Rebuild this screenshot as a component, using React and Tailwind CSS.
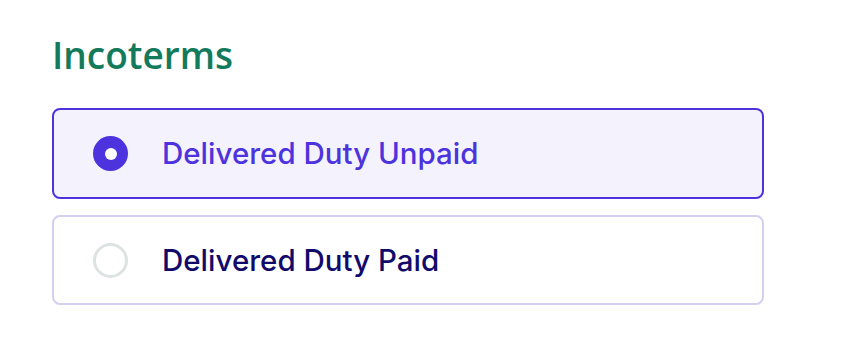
import { useState } from 'react';

const options = [
  { id: 'ddu', label: 'Delivered Duty Unpaid' },
  { id: 'ddp', label: 'Delivered Duty Paid' },
];

export default function App() {
  const [value, setValue] = useState('ddu');

  return (
    <div className="w-[842px] h-[344px] bg-white px-[52px] pt-[33px] font-['Inter',sans-serif]">
      <h2 className="text-[37px] leading-[44px] font-semibold text-[#137a5c] font-['Open_Sans',sans-serif]">Incoterms</h2>
      <div className="mt-[31px] w-[712px] flex flex-col gap-4">
        {options.map((o) => {
          const on = value === o.id;
          return (
            <button
              key={o.id}
              onClick={() => setValue(o.id)}
              className={
                on
                  ? 'h-[91px] flex items-center rounded-lg border-2 border-[#4d33dd] bg-[#f4f3fd] text-left'
                  : 'h-[90px] flex items-center rounded-lg border-2 border-[#d3cff1] bg-white text-left'
              }
            >
              <span
                className={
                  on
                    ? 'ml-[39px] w-[35px] h-[35px] rounded-full bg-[#4d33dd] flex items-center justify-center'
                    : 'ml-[39px] w-[35px] h-[35px] rounded-full border-[3px] border-[#dde2e3] bg-white'
                }
              >
                {on && <span className="w-[12px] h-[12px] rounded-full bg-white" />}
              </span>
              <span className={on ? 'ml-[34px] text-[29.5px] font-medium text-[#4d33dd]' : 'ml-[34px] text-[29.5px] font-medium text-[#120a6b]'}>
                {o.label}
              </span>
            </button>
          );
        })}
      </div>
    </div>
  );
}
